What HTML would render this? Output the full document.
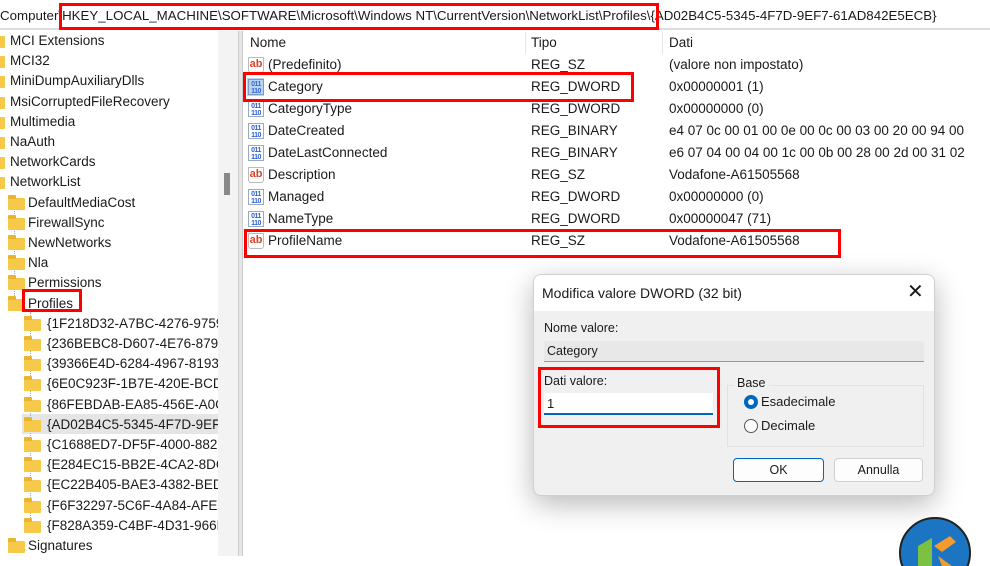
<!DOCTYPE html>
<html><head><meta charset="utf-8"><style>
*{margin:0;padding:0;box-sizing:border-box}
body{width:990px;height:556px;overflow:hidden;background:#fff;font-family:"Liberation Sans",sans-serif;font-size:13.5px;color:#1a1a1a;position:relative}
.a{position:absolute;white-space:nowrap}
.t{position:absolute;white-space:nowrap;line-height:20px}
.fold{position:absolute;width:17px;height:12px;background:#f7c948;border-radius:1px}
.fold:before{content:"";position:absolute;left:0;top:-3px;width:8px;height:4px;background:#e9b530;border-radius:1px 1px 0 0}
.red{position:absolute;border:3px solid #f00}
.ab{position:absolute;width:16px;height:16px;border:1px solid #bbb;background:#fff;color:#d9452b;font-weight:bold;font-size:11px;line-height:13px;text-align:center;border-radius:0 0 3px 3px}
.bin{position:absolute;width:16px;height:16px;background:#fff;color:#2a5bd7;font-weight:bold;font-size:7px;line-height:7px;text-align:center;border:1px solid #9ab;padding-top:1px;letter-spacing:-0.5px}
</style></head><body>
<div class="a" style="left:0;top:0;width:990px;height:30px;border-bottom:2px solid #ddd;background:#fff"></div>
<div class="a" style="left:0;top:8px;font-size:13.3px">Computer\HKEY_LOCAL_MACHINE\SOFTWARE\Microsoft\Windows NT\CurrentVersion\NetworkList\Profiles\{AD02B4C5-5345-4F7D-9EF7-61AD842E5ECB}</div>
<div class="red" style="left:59px;top:3px;width:600px;height:27px"></div>
<div class="a" style="left:218px;top:31px;width:20px;height:525px;background:#f3f3f3"></div>
<div class="a" style="left:224px;top:173px;width:6px;height:22px;background:#888"></div>
<div class="a" style="left:238px;top:31px;width:5px;height:525px;background:#e6e6e6;border-left:1px solid #ccc;border-right:1px solid #ccc"></div>
<div class="a" style="left:22px;top:414px;width:196px;height:20px;background:#e5e5e5"></div>
<div class="a" style="left:14px;top:200px;width:1px;height:100px;border-left:1px dotted #aaa"></div>
<div class="a" style="left:30px;top:312px;width:1px;height:216px;border-left:1px dotted #aaa"></div>
<div id="tree"></div>
<script>
var top1=["MCI Extensions","MCI32","MiniDumpAuxiliaryDlls","MsiCorruptedFileRecovery","Multimedia","NaAuth","NetworkCards","NetworkList"];
var l2=["DefaultMediaCost","FirewallSync","NewNetworks","Nla","Permissions","Profiles"];
var l3=["{1F218D32-A7BC-4276-9759","{236BEBC8-D607-4E76-879A","{39366E4D-6284-4967-8193","{6E0C923F-1B7E-420E-BCD6","{86FEBDAB-EA85-456E-A0C","{AD02B4C5-5345-4F7D-9EF7","{C1688ED7-DF5F-4000-8826","{E284EC15-BB2E-4CA2-8DC","{EC22B405-BAE3-4382-BED","{F6F32297-5C6F-4A84-AFEE","{F828A359-C4BF-4D31-966E"];
var h="",i=0,y;
function row(fx,tx,txt){y=31+Math.round(i*20.2);h+='<div class="fold" style="left:'+fx+'px;top:'+(y+5)+'px"></div><div class="t" style="left:'+tx+'px;top:'+y+'px;width:'+(218-tx)+'px;overflow:hidden">'+txt+'</div>';i++;}
top1.forEach(function(t){row(-12,10,t)});
l2.forEach(function(t){row(8,28,t)});
l3.forEach(function(t){row(24,47,t)});
row(8,28,"Signatures");
document.getElementById("tree").innerHTML=h;
</script>
<div class="red" style="left:22px;top:289px;width:60px;height:23px"></div>
<div class="a" style="left:250px;top:35px">Nome</div>
<div class="a" style="left:531px;top:35px">Tipo</div>
<div class="a" style="left:669px;top:35px">Dati</div>
<div class="a" style="left:525px;top:32px;width:1px;height:22px;background:#e5e5e5"></div>
<div class="a" style="left:662px;top:32px;width:1px;height:22px;background:#e5e5e5"></div>
<div id="rows"></div>
<script>
var r=[["ab","(Predefinito)","REG_SZ","(valore non impostato)"],["bin","Category","REG_DWORD","0x00000001 (1)"],["bin","CategoryType","REG_DWORD","0x00000000 (0)"],["bin","DateCreated","REG_BINARY","e4 07 0c 00 01 00 0e 00 0c 00 03 00 20 00 94 00"],["bin","DateLastConnected","REG_BINARY","e6 07 04 00 04 00 1c 00 0b 00 28 00 2d 00 31 02"],["ab","Description","REG_SZ","Vodafone-A61505568"],["bin","Managed","REG_DWORD","0x00000000 (0)"],["bin","NameType","REG_DWORD","0x00000047 (71)"],["ab","ProfileName","REG_SZ","Vodafone-A61505568"]];
var s="";r.forEach(function(a,k){var yy=55+k*22;
s+=(a[0]=="ab"?'<div class="ab" style="left:248px;top:'+(yy+2)+'px">ab</div>':'<div class="bin" style="left:248px;top:'+(yy+2)+'px">011<br>110</div>');
s+='<div class="t" style="left:268px;top:'+yy+'px">'+a[1]+'</div><div class="t" style="left:531px;top:'+yy+'px">'+a[2]+'</div><div class="t" style="left:669px;top:'+yy+'px">'+a[3]+'</div>';});
document.getElementById("rows").innerHTML=s;
</script>
<div class="a" style="left:247px;top:78px;width:17px;height:18px;background:#3b82d6;opacity:.35"></div>
<div class="red" style="left:243px;top:72px;width:391px;height:30px"></div>
<div class="red" style="left:244px;top:229px;width:597px;height:29px"></div>
<div class="a" style="left:533px;top:274px;width:402px;height:222px;background:#f0f0f0;border:1px solid #d0d0d0;border-radius:8px;box-shadow:0 8px 28px rgba(0,0,0,.28);overflow:hidden">
  <div style="position:absolute;left:0;top:0;width:402px;height:36px;background:#fff"></div>
  <div class="a" style="left:8px;top:10px;font-size:14px">Modifica valore DWORD (32 bit)</div>
  <div class="a" style="left:373px;top:4px;font-size:20px;font-weight:300">✕</div>
  <div class="a" style="left:10px;top:46px;font-size:12.5px">Nome valore:</div>
  <div class="a" style="left:10px;top:66px;width:380px;height:21px;background:#e8e8e8;border-bottom:1px solid #999"></div>
  <div class="a" style="left:13px;top:69px;font-size:12.5px">Category</div>
  <div class="a" style="left:10px;top:99px;font-size:12.5px">Dati valore:</div>
  <div class="a" style="left:10px;top:118px;width:169px;height:22px;background:#fff;border-bottom:2px solid #0067c0"></div>
  <div class="a" style="left:13px;top:121px;font-size:13px">1</div>
  <div class="a" style="left:193px;top:110px;width:197px;height:62px;border:1px solid #e2e2e2"></div>
  <div class="a" style="left:200px;top:101px;font-size:12.5px;background:#f0f0f0;padding:0 3px">Base</div>
  <div class="a" style="left:210px;top:120px;width:14px;height:14px;border-radius:50%;background:#0067c0"><div style="position:absolute;left:4px;top:4px;width:6px;height:6px;border-radius:50%;background:#fff"></div></div>
  <div class="a" style="left:227px;top:119px;font-size:13px">Esadecimale</div>
  <div class="a" style="left:210px;top:144px;width:14px;height:14px;border-radius:50%;border:1px solid #555;background:#fff"></div>
  <div class="a" style="left:227px;top:143px;font-size:13px">Decimale</div>
  <div class="a" style="left:199px;top:183px;width:91px;height:24px;background:#fdfdfd;border:1px solid #0067c0;border-radius:4px;text-align:center;line-height:22px;font-size:12.5px">OK</div>
  <div class="a" style="left:300px;top:183px;width:89px;height:24px;background:#fdfdfd;border:1px solid #d0d0d0;border-radius:4px;text-align:center;line-height:22px;font-size:12.5px">Annulla</div>
</div>
<div class="red" style="left:538px;top:367px;width:182px;height:61px"></div>
<svg class="a" style="left:898px;top:516px" width="76" height="50" viewBox="0 0 76 50">
<circle cx="37" cy="37" r="35" fill="#1c75c2" stroke="#222" stroke-width="2"/>
<path d="M20 30 L34 22 L34 50 L20 50Z" fill="#7cc242"/>
<path d="M36 30 L52 20 L58 26 L44 36Z" fill="#f59a2c"/>
<path d="M40 40 L54 50 L44 50Z" fill="#f59a2c"/>
</svg>
</body></html>
